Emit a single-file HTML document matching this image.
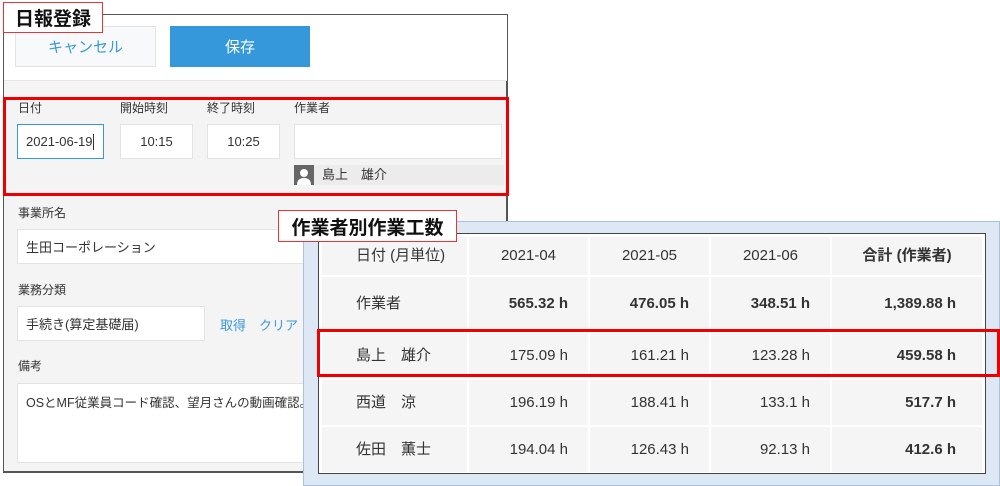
<!DOCTYPE html>
<html><head><meta charset="utf-8"><style>
*{box-sizing:border-box;margin:0;padding:0}
body{width:1000px;height:486px;background:#fff;position:relative;overflow:hidden;font-family:"Liberation Sans","Noto Sans CJK JP",sans-serif;color:#333}
.a{position:absolute}
.panel{left:3px;top:14px;width:505px;height:459px;border:2px solid #555;border-left-width:1px;background:#f4f4f4}
.top{left:4px;top:15px;width:503px;height:66px;background:#fff;border-bottom:1px solid #e6e6e6}
.lbl{font-size:12px;color:#333;line-height:14px}
.inp{background:#fff;border:1px solid #e3e3e3;font-size:13px;color:#333;display:flex;align-items:center}
.ttl{background:#fff;border:1.5px solid #e8333a;font-weight:bold;font-size:19px;color:#111;display:flex;align-items:center;justify-content:center}
.red{border:3px solid #ee0000}
table{border-collapse:separate;border-spacing:2px;font-size:15px}
td{background:#f5f5f5;height:0;vertical-align:middle;line-height:18px}
td span{display:inline-block;vertical-align:middle}
</style></head><body>
<div class="a panel"></div>
<div class="a top"></div>
<div class="a" style="left:15px;top:26px;width:141px;height:41px;background:#f7f9fa;border:1px solid #e3e3e3;color:#3b9ad9;font-size:15px;display:flex;align-items:center;justify-content:center">キャンセル</div>
<div class="a" style="left:170px;top:26px;width:140px;height:41px;background:#3498db;color:#fff;font-size:15px;display:flex;align-items:center;justify-content:center">保存</div>
<div class="a ttl" style="left:3px;top:2px;width:100px;height:31px">日報登録</div>

<div class="a lbl" style="left:18px;top:101px">日付</div>
<div class="a lbl" style="left:120px;top:101px">開始時刻</div>
<div class="a lbl" style="left:207px;top:101px">終了時刻</div>
<div class="a lbl" style="left:294px;top:101px">作業者</div>
<div class="a inp" style="left:17px;top:124px;width:87px;height:35px;border-color:#3498db;padding-left:8px">2021-06-19<span style="border-left:1px solid #333;height:16px"></span></div>
<div class="a inp" style="left:120px;top:124px;width:73px;height:35px;justify-content:center">10:15</div>
<div class="a inp" style="left:207px;top:124px;width:73px;height:35px;justify-content:center">10:25</div>
<div class="a inp" style="left:294px;top:124px;width:208px;height:35px"></div>
<div class="a" style="left:294px;top:165px;width:20px;height:20px;background:#666;overflow:hidden">
<svg width="20" height="20"><circle cx="10" cy="8" r="4" fill="#fff"/><path d="M3 20 Q3 13 10 13 Q17 13 17 20Z" fill="#fff"/></svg></div>
<div class="a" style="left:314px;top:165px;width:190px;height:20px;background:#ececec"></div>
<div class="a lbl" style="left:322px;top:168px;font-size:13px">島上　雄介</div>
<div class="a red" style="left:3px;top:97px;width:506px;height:99px"></div>

<div class="a lbl" style="left:18px;top:206px">事業所名</div>
<div class="a inp" style="left:17px;top:229px;width:290px;height:35px;padding-left:8px">生田コーポレーション</div>
<div class="a lbl" style="left:18px;top:283px">業務分類</div>
<div class="a inp" style="left:17px;top:306px;width:188px;height:35px;padding-left:8px">手続き(算定基礎届)</div>
<div class="a" style="left:220px;top:315px;font-size:13px;color:#3b9ad9">取得　クリア</div>
<div class="a lbl" style="left:18px;top:359px">備考</div>
<div class="a inp" style="left:17px;top:383px;width:290px;height:80px;align-items:flex-start;padding:8px 0 0 8px;font-size:12.5px;white-space:nowrap;overflow:hidden">OSとMF従業員コード確認、望月さんの動画確認。</div>

<div class="a" style="left:303px;top:221px;width:697px;height:265px;background:#dde8f4;border:1px solid #a9c3df"></div>
<div class="a" style="left:318px;top:233px;width:668px;height:241px;background:#fff;border:1px solid #444;padding:1px">
<table style="width:100%">
<tr style="height:38px"><td style="width:145px;padding-left:34px">日付 (月単位)</td><td style="width:119px;text-align:center">2021-04</td><td style="width:119px;text-align:center">2021-05</td><td style="width:119px;text-align:center">2021-06</td><td style="text-align:center;font-weight:bold">合計 (作業者)</td></tr>
<tr style="height:54px;font-weight:bold"><td style="padding-left:34px;font-weight:normal">作業者</td><td style="text-align:right;padding-right:20px">565.32 h</td><td style="text-align:right;padding-right:20px">476.05 h</td><td style="text-align:right;padding-right:20px">348.51 h</td><td style="text-align:right;padding-right:26px">1,389.88 h</td></tr>
<tr style="height:45px"><td style="padding-left:34px">島上　雄介</td><td style="text-align:right;padding-right:20px">175.09 h</td><td style="text-align:right;padding-right:20px">161.21 h</td><td style="text-align:right;padding-right:20px">123.28 h</td><td style="text-align:right;padding-right:26px;font-weight:bold">459.58 h</td></tr>
<tr style="height:45px"><td style="padding-left:34px">西道　涼</td><td style="text-align:right;padding-right:20px">196.19 h</td><td style="text-align:right;padding-right:20px">188.41 h</td><td style="text-align:right;padding-right:20px">133.1 h</td><td style="text-align:right;padding-right:26px;font-weight:bold">517.7 h</td></tr>
<tr style="height:45px"><td style="padding-left:34px">佐田　薫士</td><td style="text-align:right;padding-right:20px">194.04 h</td><td style="text-align:right;padding-right:20px">126.43 h</td><td style="text-align:right;padding-right:20px">92.13 h</td><td style="text-align:right;padding-right:26px;font-weight:bold">412.6 h</td></tr>
</table></div>
<div class="a red" style="left:317px;top:329px;width:683px;height:48px"></div>
<div class="a ttl" style="left:278px;top:210px;width:179px;height:32px">作業者別作業工数</div>
</body></html>
